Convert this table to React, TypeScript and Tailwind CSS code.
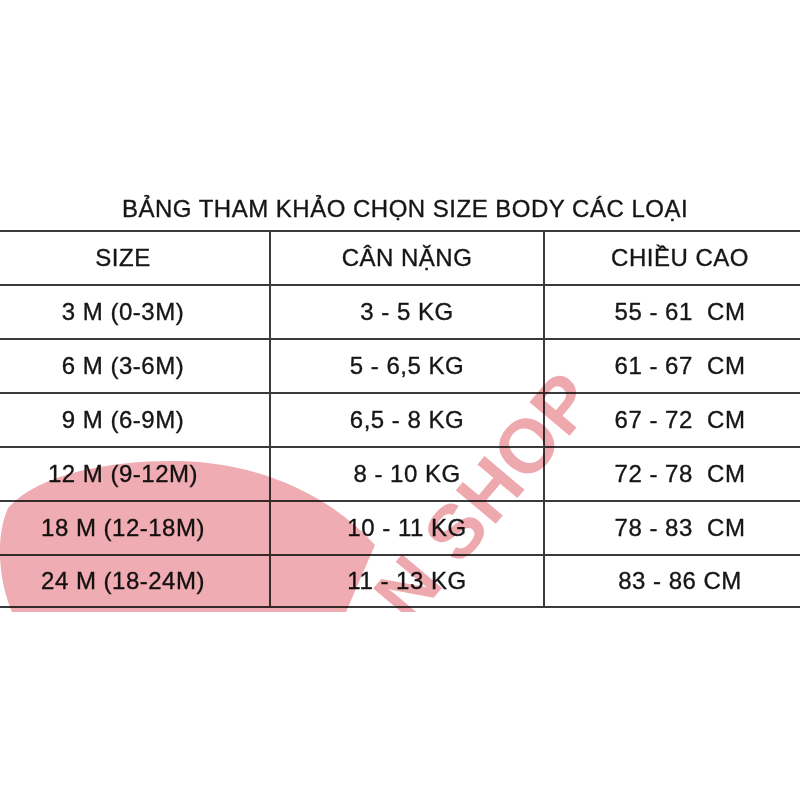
const rows = [
  ["3 M (0-3M)", "3 - 5 KG", "55 - 61  CM"],
  ["6 M (3-6M)", "5 - 6,5 KG", "61 - 67  CM"],
  ["9 M (6-9M)", "6,5 - 8 KG", "67 - 72  CM"],
  ["12 M (9-12M)", "8 - 10 KG", "72 - 78  CM"],
  ["18 M (12-18M)", "10 - 11 KG", "78 - 83  CM"],
  ["24 M (18-24M)", "11 - 13 KG", "83 - 86 CM"],
];

function Row({ cells, last }: { cells: string[]; last?: boolean }) {
  return (
    <div
      className={`grid h-[54px] grid-cols-[292px_274px_1fr] border-t-2 border-[#3a3a3a] ${
        last ? "border-b-2" : ""
      }`}
    >
      <div className="flex items-center justify-center whitespace-pre">{cells[0]}</div>
      <div className="flex items-center justify-center whitespace-pre border-l-2 border-[#3a3a3a]">
        {cells[1]}
      </div>
      <div className="flex items-center justify-center whitespace-pre border-l-2 border-[#3a3a3a]">
        {cells[2]}
      </div>
    </div>
  );
}

// pink shop watermark, multiplied so the black text stays dark under it
function Watermark() {
  return (
    <svg
      className="pointer-events-none absolute left-0 top-0 mix-blend-multiply"
      width="800"
      height="612"
      viewBox="0 0 800 612"
    >
      <path
        d="M 12 612 C 0 585, -6 540, 8 508 C 40 472, 115 460, 180 461 C 260 463, 330 495, 375 545 L 346 612 Z"
        fill="rgba(214,50,65,0.4)"
      />
      <text
        x="410"
        y="626"
        transform="rotate(-50 410 626)"
        fontFamily="'Liberation Sans', Arial, sans-serif"
        fontWeight="700"
        fontSize="76"
        fill="rgba(214,50,65,0.42)"
        style={{ whiteSpace: "pre" }}
      >
        N SHOP
      </text>
    </svg>
  );
}

export default function App() {
  return (
    <div className="relative h-[800px] w-[800px] overflow-hidden bg-white pt-[197px] font-['Liberation_Sans',Arial,sans-serif] text-[24px] tracking-[0.5px] text-[#161616] [-webkit-text-stroke:0.35px_#161616]">
      <h1 className="h-[24px] pl-[10px] text-center text-[24px] leading-[24px] font-normal">
        BẢNG THAM KHẢO CHỌN SIZE BODY CÁC LOẠI
      </h1>

      <div className="mt-[9px] ml-[-23px] w-[838px]">
        <Row cells={["SIZE", "CÂN NẶNG", "CHIỀU CAO"]} />
        {rows.map((r, i) => (
          <Row key={i} cells={r} last={i === rows.length - 1} />
        ))}
      </div>

      <Watermark />
    </div>
  );
}
